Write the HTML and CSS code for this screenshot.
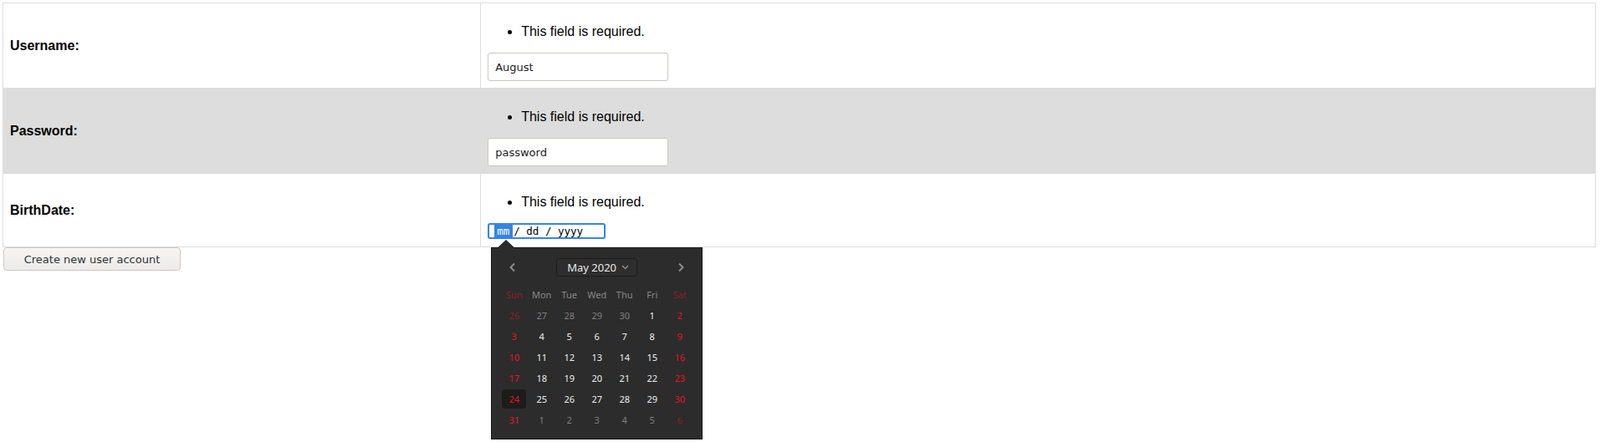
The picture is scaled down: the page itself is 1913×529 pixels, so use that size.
FILE: index.html
```html
<!DOCTYPE html>
<html>
<head>
<meta charset="utf-8">
<title>Create account</title>
<link rel="stylesheet" href="styles.css">
</head>
<body>
<form class="signup">
  <table class="form-table">
    <tr class="row">
      <th class="label">Username:</th>
      <td class="field">
        <ul class="errors"><li>This field is required.</li></ul>
        <input class="text-input" type="text" value="August">
      </td>
    </tr>
    <tr class="row row-alt">
      <th class="label">Password:</th>
      <td class="field">
        <ul class="errors"><li>This field is required.</li></ul>
        <input class="text-input" type="text" value="password">
      </td>
    </tr>
    <tr class="row">
      <th class="label">BirthDate:</th>
      <td class="field">
        <ul class="errors"><li>This field is required.</li></ul>
        <div class="date-wrap">
          <div class="date-input"><span class="seg-active">mm</span><span class="seg-rest">/ dd / yyyy</span></div>
          <div class="popover">
            <svg class="pointer" width="20" height="10" viewBox="0 0 20 10"><path d="M0 10 L10 0.5 L20 10" fill="#2c2c2c" stroke="#1a1a1a" stroke-width="1"/></svg>
            <div class="cal-header">
              <span class="nav-btn"><svg width="10" height="12" viewBox="0 0 10 12"><polyline points="7,1.5 2.5,6 7,10.5" fill="none" stroke="#8c8c8c" stroke-width="2"/></svg></span>
              <span class="month-btn">May 2020<svg class="caret" width="9" height="6" viewBox="0 0 9 6"><polyline points="1,1 4.5,4.5 8,1" fill="none" stroke="#9a9a9a" stroke-width="1.2"/></svg></span>
              <span class="nav-btn"><svg width="10" height="12" viewBox="0 0 10 12"><polyline points="3,1.5 7.5,6 3,10.5" fill="none" stroke="#8c8c8c" stroke-width="2"/></svg></span>
            </div>
            <div class="cal-grid">
              <span class="dn we">Sun</span><span class="dn">Mon</span><span class="dn">Tue</span><span class="dn">Wed</span><span class="dn">Thu</span><span class="dn">Fri</span><span class="dn we">Sat</span>
              <span class="d other we">26</span><span class="d other">27</span><span class="d other">28</span><span class="d other">29</span><span class="d other">30</span><span class="d">1</span><span class="d we">2</span>
              <span class="d we">3</span><span class="d">4</span><span class="d">5</span><span class="d">6</span><span class="d">7</span><span class="d">8</span><span class="d we">9</span>
              <span class="d we">10</span><span class="d">11</span><span class="d">12</span><span class="d">13</span><span class="d">14</span><span class="d">15</span><span class="d we">16</span>
              <span class="d we">17</span><span class="d">18</span><span class="d">19</span><span class="d">20</span><span class="d">21</span><span class="d">22</span><span class="d we">23</span>
              <span class="d we"><span class="sel">24</span></span><span class="d">25</span><span class="d">26</span><span class="d">27</span><span class="d">28</span><span class="d">29</span><span class="d we">30</span>
              <span class="d we">31</span><span class="d other">1</span><span class="d other">2</span><span class="d other">3</span><span class="d other">4</span><span class="d other">5</span><span class="d other we">6</span>
            </div>
          </div>
        </div>
      </td>
    </tr>
  </table>
  <button class="submit" type="button">Create new user account</button>
</form>
</body>
</html>
```

FILE: styles.css
```css
html {
  height: 100%;
}

body {
  margin: 3px;
  min-height: calc(100% - 6px);
  background: #ffffff;
  font-family: "Liberation Sans", Arial, sans-serif;
  font-size: 16px;
  color: #000;
}

.signup {
  margin: 0;
}

.form-table {
  border-collapse: collapse;
  width: calc(100% - 2px);
  border: 1px solid #dddddd;
}

.row-alt {
  background: #dddddd;
}

.label,
.field {
  border: 1px solid #dddddd;
  padding: 8px;
}

.label {
  width: 30%;
  text-align: left;
  vertical-align: middle;
  font-weight: bold;
  font-size: 16px;
}

.field {
  vertical-align: top;
}

.errors {
  margin: 16px 0;
  padding-left: 40px;
  line-height: 19px;
}

.text-input {
  display: block;
  box-sizing: border-box;
  width: 216px;
  height: 34px;
  margin: 0;
  padding: 0 8px;
  border: 1px solid #cdc7c2;
  border-radius: 3px;
  background: #ffffff;
  font-family: "DejaVu Sans", sans-serif;
  font-size: 13px;
  color: #1c1c1c;
  outline: none;
}

.date-wrap {
  position: relative;
  width: 141px;
  margin: 2px 0 1px;
}

.date-input {
  box-sizing: border-box;
  width: 141px;
  height: 19px;
  border: 2px solid #3584e4;
  border-radius: 3px;
  padding-left: 6px;
  display: flex;
  align-items: stretch;
  font-family: "DejaVu Sans Mono", monospace;
  font-size: 12.5px;
  line-height: 15px;
  color: #000;
  background: #fff;
}

.seg-active {
  background: #3584e4;
  color: #ffffff;
  padding: 0 4px 0 3px;
}

.seg-rest {
  padding-left: 1px;
}

.popover {
  position: absolute;
  left: 4px;
  top: 29px;
  box-sizing: border-box;
  width: 253px;
  height: 230px;
  padding: 12px 10px 10px;
  background: #2c2c2c;
  border: 1px solid #1a1a1a;
  font-family: "Noto Sans", "DejaVu Sans", sans-serif;
  color: #eeeeec;
  z-index: 5;
}

.pointer {
  position: absolute;
  left: 7px;
  top: -10px;
}

.cal-header {
  display: flex;
  justify-content: space-between;
  align-items: center;
  height: 22px;
}

.nav-btn {
  width: 30px;
  height: 22px;
  display: flex;
  align-items: center;
  justify-content: center;
}

.month-btn {
  box-sizing: border-box;
  width: 97px;
  height: 22px;
  border: 1px solid #1b1b1b;
  border-radius: 4px;
  background: #2e2e2e;
  display: flex;
  align-items: center;
  justify-content: space-between;
  padding: 0 9px 0 12px;
  font-size: 13px;
  color: #e8e8e6;
}

.caret {
  display: block;
}

.cal-grid {
  margin-top: 9px;
  display: grid;
  grid-template-columns: repeat(7, 33px);
  grid-auto-rows: 25px;
  font-size: 11px;
}

.cal-grid > span {
  display: flex;
  align-items: center;
  justify-content: center;
}

.dn {
  color: #888888;
}

.dn.we {
  color: #951c1c;
}

.d {
  color: #eeeeec;
}

.d.we {
  color: #e8141c;
}

.d.other {
  color: #808080;
}

.d.other.we {
  color: #921c1c;
}

.sel {
  display: flex;
  align-items: center;
  justify-content: center;
  width: 29px;
  height: 23px;
  border-radius: 4px;
  background: #1c1c1c;
}

.submit {
  display: block;
  box-sizing: border-box;
  width: 212px;
  height: 28px;
  margin: 0 0 0 1px;
  padding: 0;
  border: 1px solid #cdc7c2;
  border-radius: 4px;
  background: linear-gradient(#f6f5f4, #edebe9);
  font-family: "DejaVu Sans", sans-serif;
  font-size: 13px;
  color: #2e3436;
}
```
